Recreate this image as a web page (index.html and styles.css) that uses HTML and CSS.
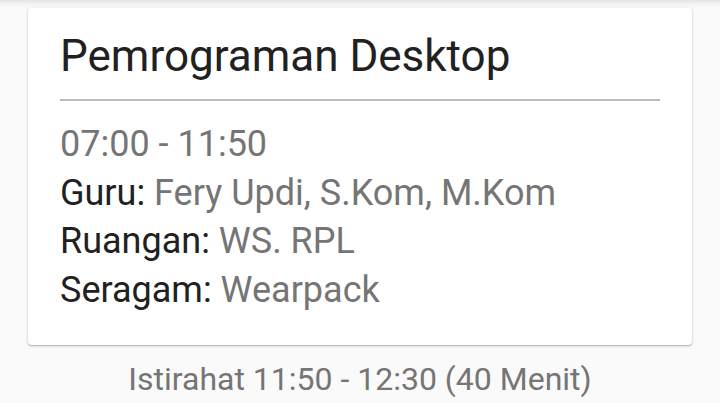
FILE: index.html
```html
<!DOCTYPE html>
<html lang="id">
<head>
<meta charset="utf-8">
<title>Jadwal</title>
<link rel="stylesheet" href="styles.css">
</head>
<body>
<div class="screen">
  <div class="card">
    <h1 class="title">Pemrograman Desktop</h1>
    <div class="divider"></div>
    <div class="info">
      <div class="line muted">07:00 - 11:50</div>
      <div class="line"><span class="label">Guru:</span> <span class="muted">Fery Updi, S.Kom, M.Kom</span></div>
      <div class="line"><span class="label">Ruangan:</span> <span class="muted">WS. RPL</span></div>
      <div class="line"><span class="label">Seragam:</span> <span class="muted">Wearpack</span></div>
    </div>
  </div>
  <div class="break">Istirahat 11:50 - 12:30 (40 Menit)</div>
</div>
</body>
</html>
```
FILE: styles.css
```css
html, body {
  margin: 0;
  padding: 0;
}
body {
  width: 720px;
  height: 403px;
  overflow: hidden;
  background: #fafafa;
  font-family: Roboto, "Noto Sans", sans-serif;
}
.screen {
  padding-top: 8px;
  background: linear-gradient(#e2e2e2 0, #f3f3f3 4px, #fafafa 8px) no-repeat;
  background-size: 100% 8px;
}
.card {
  margin: 0 28px;
  padding: 22px 32px 30px;
  background: #fff;
  border-radius: 4px;
  box-shadow: 0 1px 3px rgba(0,0,0,0.22), 0 1px 1px rgba(0,0,0,0.12);
}
.title {
  margin: 0;
  font-size: 44px;
  line-height: 52px;
  font-weight: 400;
  color: #212121;
}
.divider {
  margin-top: 17px;
  height: 2px;
  background: #bdbdbd;
}
.info {
  padding-top: 19px;
}
.line {
  font-size: 36px;
  line-height: 48.7px;
  color: #212121;
}
.muted {
  color: #757575;
}
.break {
  text-align: center;
  font-size: 32px;
  line-height: 40px;
  color: #757575;
  padding-top: 14px;
}
```
